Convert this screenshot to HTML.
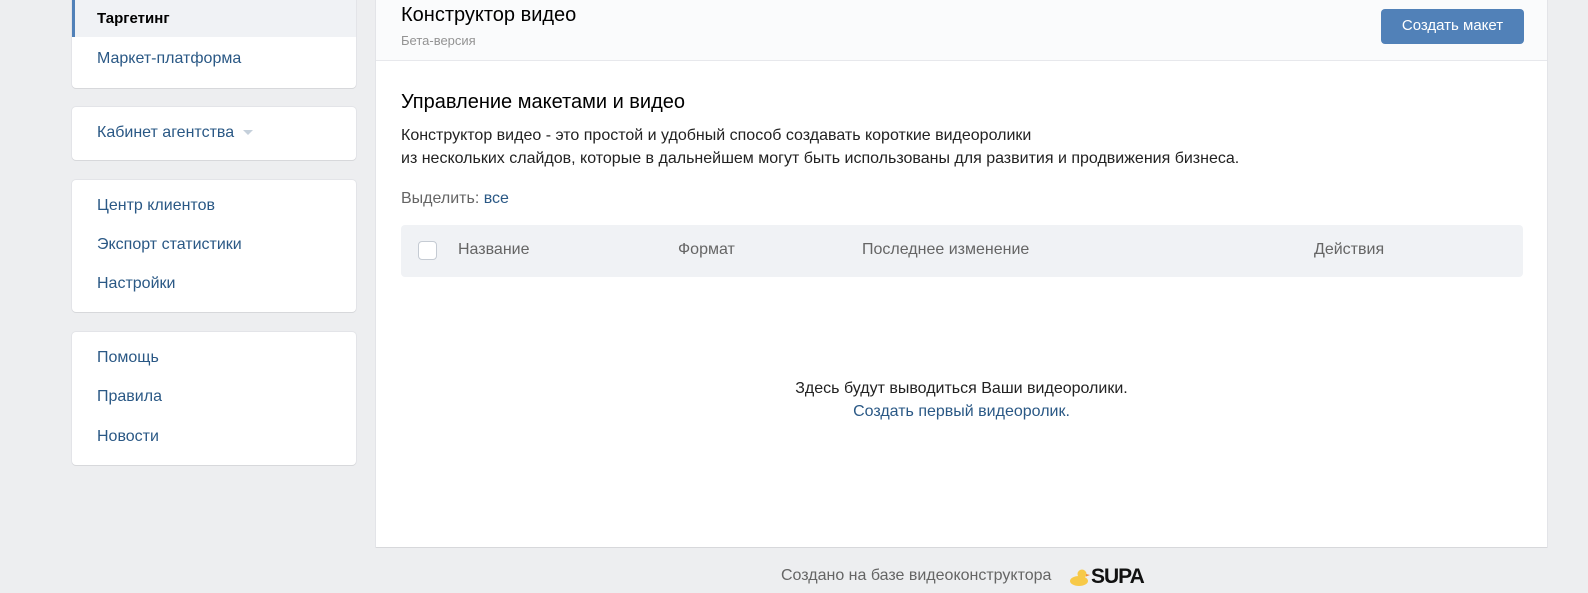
<!DOCTYPE html>
<html><head><meta charset="utf-8"><style>
*{box-sizing:border-box;margin:0;padding:0}
body{width:1588px;height:593px;background:#edeef0;font-family:"Liberation Sans",sans-serif;font-size:16px;position:relative;overflow:hidden;color:#000}
.card{position:absolute;left:72px;width:284px;background:#fff;border-radius:0 0 4px 4px;box-shadow:0 1px 0 0 #d7d8db,0 0 0 1px #e3e4e8}
.it{position:absolute;left:25px;color:#2a5885;font-size:16px}
.main{position:absolute;left:376px;top:0;width:1171px;height:547px;background:#fff;box-shadow:0 1px 0 0 #d7d8db,0 0 0 1px #e3e4e8}
.abs{position:absolute}
</style></head><body>
<div class="card" style="top:-4px;height:92px">
 <div class="abs" style="left:0;top:4px;width:284px;height:37px;background:#f0f2f5;border-left:3px solid #5181b8"></div>
 <div class="it" style="top:14px;color:#000;font-weight:bold;font-size:15px">Таргетинг</div>
 <div class="it" style="top:54px">Маркет-платформа</div>
</div>
<div class="card" style="top:107px;height:53px;border-radius:4px">
 <div class="it" style="top:17px">Кабинет агентства <span style="display:inline-block;margin-left:4px;border-left:5px solid transparent;border-right:5px solid transparent;border-top:5px solid #c5d0db;vertical-align:middle"></span></div>
</div>
<div class="card" style="top:180px;height:132px;border-radius:4px">
 <div class="it" style="top:17px">Центр клиентов</div>
 <div class="it" style="top:56px">Экспорт статистики</div>
 <div class="it" style="top:95px">Настройки</div>
</div>
<div class="card" style="top:332px;height:133px;border-radius:4px">
 <div class="it" style="top:17px">Помощь</div>
 <div class="it" style="top:56px">Правила</div>
 <div class="it" style="top:96px">Новости</div>
</div>
<div class="main">
 <div class="abs" style="left:0;top:0;width:1171px;height:61px;background:#fafbfc;border-bottom:1px solid #e7e8ec"></div>
 <div class="abs" style="left:25px;top:4px;font-size:20px">Конструктор видео</div>
 <div class="abs" style="left:25px;top:33px;font-size:13px;color:#939393">Бета-версия</div>
 <div class="abs" style="left:1005px;top:9px;width:143px;height:35px;background:#5181b8;border-radius:4px;color:#fff;font-size:15px;text-align:center;line-height:34px">Создать макет</div>
 <div class="abs" style="left:25px;top:91px;font-size:20px">Управление макетами и видео</div>
 <div class="abs" style="left:25px;top:124px;font-size:16px;line-height:23px;color:#222">Конструктор видео - это простой и удобный способ создавать короткие видеоролики<br>из нескольких слайдов, которые в дальнейшем могут быть использованы для развития и продвижения бизнеса.</div>
 <div class="abs" style="left:25px;top:190px;color:#656565">Выделить: <span style="color:#2a5885">все</span></div>
 <div class="abs" style="left:25px;top:225px;width:1122px;height:52px;background:#f0f2f5;border-radius:4px;color:#656565">
  <div class="abs" style="left:17px;top:16px;width:19px;height:19px;border:1px solid #c5cbd3;border-radius:4px;background:#fff"></div>
  <div class="abs" style="left:57px;top:16px">Название</div>
  <div class="abs" style="left:277px;top:16px">Формат</div>
  <div class="abs" style="left:461px;top:16px">Последнее изменение</div>
  <div class="abs" style="left:913px;top:16px">Действия</div>
 </div>
 <div class="abs" style="left:0;width:1171px;top:377px;text-align:center;font-size:16px;line-height:23px;color:#222">Здесь будут выводиться Ваши видеоролики.<br><span style="color:#2a5885">Создать первый видеоролик.</span></div>
</div>
<div class="abs" style="left:781px;top:567px;color:#656565;font-size:16px">Создано на базе видеоконструктора</div>
<svg class="abs" style="left:1069px;top:567px" width="22" height="20" viewBox="0 0 22 20"><ellipse cx="10" cy="14" rx="9" ry="5" fill="#f7c948"/><circle cx="13" cy="7" r="4.5" fill="#f7c948"/><path d="M17 7 L21 8 L17 9.5Z" fill="#f08a3c"/></svg>
<div class="abs" style="left:1091px;top:565px;font-size:21px;font-weight:bold;color:#111;letter-spacing:-1px">SUPA</div>
</body></html>
